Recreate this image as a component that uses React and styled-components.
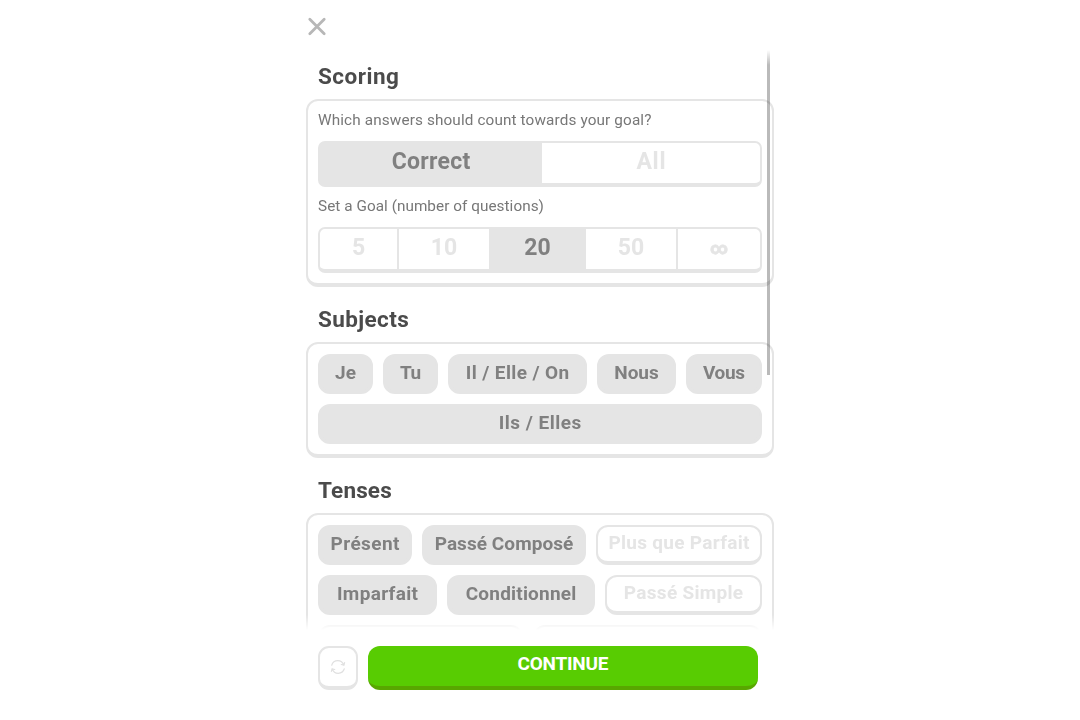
import React from 'react';
import styled, { createGlobalStyle } from 'styled-components';

const GlobalStyle = createGlobalStyle`
  * { box-sizing: border-box; }
  body { margin: 0; background: #fff; font-family: Roboto, "Liberation Sans", sans-serif; }
  button { font: inherit; margin: 0; padding: 0; border: 0; background: none; }
`;

const Page = styled.main`
  width: 468px;
  height: 720px;
  margin: 0 auto;
  display: flex;
  flex-direction: column;
  overflow: hidden;
`;

const TopBar = styled.header`
  height: 50px;
  padding: 17px 0 0 1px;
  flex: none;
`;

const CloseButton = styled.button`
  display: block;
  width: 20px;
  height: 20px;
  svg { display: block; }
`;

const ScrollArea = styled.div`
  position: relative;
  height: 580px;
  flex: none;
  overflow: hidden;
  mask-image: linear-gradient(to bottom, transparent 0, #000 15px, #000 565px, transparent 580px);
`;

const ScrollThumb = styled.div`
  position: absolute;
  top: 0;
  right: 4px;
  width: 3px;
  height: 325px;
  background: rgba(0, 0, 0, 0.27);
`;

const Heading = styled.h2`
  margin: 0;
  height: ${p => p.$height}px;
  padding: 0 12px 9px;
  display: flex;
  align-items: flex-end;
  font-size: 22.5px;
  line-height: 28px;
  font-weight: 700;
  color: #4b4b4b;
`;

const Card = styled.section`
  border: 2px solid #e5e5e5;
  border-bottom-width: 4px;
  border-radius: 12px;
  padding: 10px;
`;

const Label = styled.p`
  margin: 0;
  height: ${p => p.$height}px;
  padding-top: ${p => p.$top}px;
  font-size: 15.3px;
  line-height: 18px;
  color: #777;
  white-space: nowrap;
`;

const Segments = styled.div`
  height: 46px;
  display: flex;
  border: 2px solid #e5e5e5;
  border-bottom-width: 4px;
  border-radius: 7px;
`;

const Segment = styled.button`
  width: ${p => p.$w}px;
  flex: none;
  border-left: ${p => (p.$divided ? '2px solid #e5e5e5' : '0')};
  background: ${p => (p.$on ? '#e5e5e5' : 'transparent')};
  color: ${p => (p.$on ? '#808080' : '#e5e5e5')};
  font-size: 23px;
  line-height: 28px;
  font-weight: 700;
  padding-bottom: 3px;
`;

const Infinity = styled.span`
  display: inline-block;
  font-size: 17px;
  font-weight: 900;
  -webkit-text-stroke: 0.6px currentColor;
`;

const Chips = styled.div`
  display: flex;
  flex-direction: column;
  gap: 10px;
`;

const ChipRow = styled.div`
  display: flex;
  gap: 10px;
`;

const Chip = styled.button`
  width: ${p => p.$w}px;
  flex: none;
  height: 40px;
  border: 2px solid #e5e5e5;
  border-bottom-width: 4px;
  border-radius: 12px;
  background: ${p => (p.$on ? '#e5e5e5' : '#fff')};
  color: ${p => (p.$on ? '#808080' : '#e5e5e5')};
  font-size: 19px;
  line-height: 24px;
  font-weight: 700;
  white-space: nowrap;
  padding-bottom: ${p => (p.$on ? 1 : 3)}px;
`;

const Text = styled.span`
  display: inline-block;
  letter-spacing: ${p => p.$ls || 0}px;
  margin-right: ${p => -(p.$ls || 0)}px;
`;

const Footer = styled.footer`
  display: flex;
  gap: 10px;
  padding: 16px 16px 0 12px;
`;

const ResetButton = styled.button`
  width: 40px;
  height: 44px;
  display: flex;
  align-items: center;
  justify-content: center;
  border: 2px solid #e5e5e5;
  border-bottom-width: 4px;
  border-radius: 11px;
`;

const ContinueButton = styled.button`
  flex: 1;
  height: 44px;
  border-radius: 12px;
  border-bottom: 4px solid #58a700;
  background: #58cc02;
  color: #fff;
  font-size: 19px;
  line-height: 24px;
  font-weight: 700;
  padding-bottom: 4px;
`;

const subjects = [
  [['Je', 55, 1, 0], ['Tu', 55, 1, -0.5], ['Il / Elle / On', 139, 1, 0.4], ['Nous', 79, 1, 0], ['Vous', 76, 1, -0.3]],
  [['Ils / Elles', 444, 1, 0.5]],
];

const tenses = [
  [['Présent', 94, 1, 0.4], ['Passé Composé', 164, 1, 0.06], ['Plus que Parfait', 166, 0, 0.3]],
  [['Imparfait', 119, 1, 0.33], ['Conditionnel', 148, 1, 0.2], ['Passé Simple', 157, 0, 0.3]],
  [['', 205, 0, 0], ['', 229, 0, 0]],
];

const goals = [
  ['5', 77, 0], ['10', 92, 0], ['20', 97, 0], ['50', 90, 0], ['∞', 84, 0],
];

const ChipGrid = ({ rows }) => (
  <Chips>
    {rows.map((row, i) => (
      <ChipRow key={i}>
        {row.map(([text, w, on, ls]) => (
          <Chip key={w + text} $w={w} $on={on}><Text $ls={ls}>{text}</Text></Chip>
        ))}
      </ChipRow>
    ))}
  </Chips>
);

export default function App() {
  return (
    <>
      <GlobalStyle />
      <Page>
        <TopBar>
          <CloseButton aria-label="Close">
            <svg width="20" height="20" viewBox="0 0 20 20" fill="none" stroke="#b7b7b7" strokeWidth="2.8" strokeLinecap="round">
              <path d="M2.8 2.3 17.2 16.7M17.2 2.3 2.8 16.7" />
            </svg>
          </CloseButton>
        </TopBar>
        <ScrollArea>
          <Heading $height={49}><Text $ls={0.5}>Scoring</Text></Heading>
          <Card>
            <Label $height={30} $top={0}><Text $ls={0.13}>Which answers should count towards your goal?</Text></Label>
            <Segments>
              <Segment $w={222} $on><Text $ls={0.25}>Correct</Text></Segment>
              <Segment $w={218}><Text $ls={0.7}>All</Text></Segment>
            </Segments>
            <Label $height={40} $top={10}><Text $ls={0.05}>Set a Goal (number of questions)</Text></Label>
            <Segments>
              {goals.map(([text, w, ls], i) => (
                <Segment key={text} $w={w} $on={i === 2} $divided={i === 1 || i === 4}>
                  {text === '∞' ? <Infinity>{text}</Infinity> : <Text $ls={ls}>{text}</Text>}
                </Segment>
              ))}
            </Segments>
          </Card>
          <Heading $height={55}><Text $ls={0.4}>Subjects</Text></Heading>
          <Card><ChipGrid rows={subjects} /></Card>
          <Heading $height={55}><Text $ls={0.15}>Tenses</Text></Heading>
          <Card><ChipGrid rows={tenses} /></Card>
          <ScrollThumb />
        </ScrollArea>
        <Footer>
          <ResetButton aria-label="Reset">
            <svg width="16" height="16" viewBox="0 0 16 16" fill="none" stroke="#e0e0e0" strokeWidth="1.2" strokeLinecap="round" strokeLinejoin="round">
              <path d="M1.7 6.2C2.600 3.400 5 1.700 7.800 1.700c2.800 0 5 1.600 5.900 4.300M14.600 3.700 13.900 6.300 11.300 5.500M14.300 9.800C13.400 12.600 11 14.300 8.200 14.300c-2.800 0-5-1.600-5.900-4.300M1.400 12.300 2.100 9.700 4.700 10.500" />
            </svg>
          </ResetButton>
          <ContinueButton><Text $ls={-0.22}>CONTINUE</Text></ContinueButton>
        </Footer>
      </Page>
    </>
  );
}
